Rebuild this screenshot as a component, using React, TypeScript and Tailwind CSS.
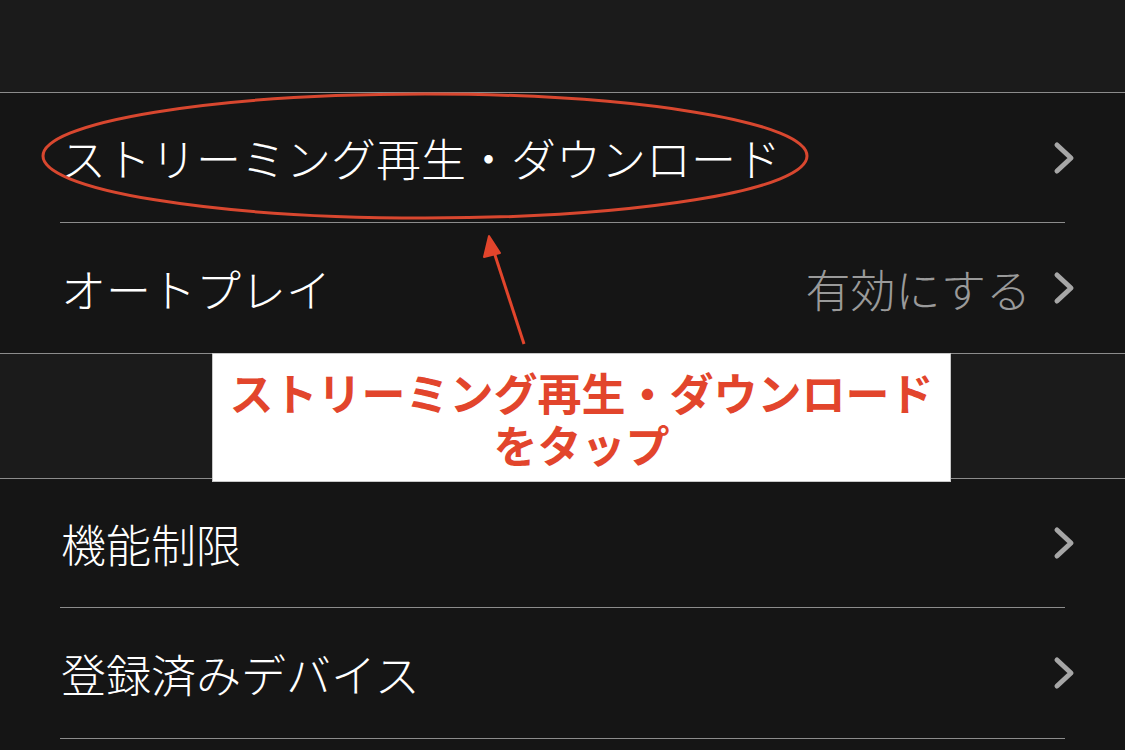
import React from "react";

const font = { fontFamily: '"Noto Sans CJK JP", "Noto Sans", sans-serif' };

function Chevron() {
  return (
    <svg width="26" height="36" viewBox="0 0 26 36" className="shrink-0">
      <polyline
        points="6,5 20,18 6,31"
        fill="none"
        stroke="#a6a6a6"
        strokeWidth="5"
        strokeLinecap="round"
        strokeLinejoin="round"
      />
    </svg>
  );
}

function Row({ label, value, h }: { label: string; value?: string; h: string }) {
  return (
    <div className={`flex items-center pl-[61px] pr-[48px] ${h}`}>
      <span className="flex-1 text-[45px] leading-none text-white font-light">{label}</span>
      {value && <span className="text-[45px] leading-none text-[#9a9a9a] font-light mr-[20px]">{value}</span>}
      <Chevron />
    </div>
  );
}

function InsetSep() {
  return (
    <div className="px-[60px]">
      <div className="h-px bg-[#8c8c8c]" />
    </div>
  );
}

export default function App() {
  return (
    <div className="relative w-[1125px] h-[750px] overflow-hidden bg-[#1a1a1a]" style={font}>
      <div className="h-[92px] bg-[#1b1b1b]" />
      <div className="h-px bg-[#8c8c8c]" />
      <div className="bg-[#151515]">
        <Row label="ストリーミング再生・ダウンロード" h="h-[129px]" />
        <InsetSep />
        <Row label="オートプレイ" value="有効にする" h="h-[130px]" />
      </div>
      <div className="h-px bg-[#8c8c8c]" />
      <div className="h-[124px] bg-[#1b1b1b]" />
      <div className="h-px bg-[#8c8c8c]" />
      <div className="bg-[#151515]">
        <Row label="機能制限" h="h-[128px]" />
        <InsetSep />
        <Row label="登録済みデバイス" h="h-[130px]" />
        <InsetSep />
        <div className="h-[20px]" />
      </div>

      {/* annotations */}
      <svg className="absolute left-0 top-0 pointer-events-none" width="1125" height="750">
        <ellipse cx="425" cy="156" rx="382" ry="62" fill="none" stroke="#d8472f" strokeWidth="3" />
        <line x1="524" y1="344" x2="494" y2="252" stroke="#e2452c" strokeWidth="3" />
        <polygon points="489,236 484,257 500,253" fill="#e2452c" stroke="#e2452c" strokeWidth="2" strokeLinejoin="round" />
      </svg>

      <div className="absolute left-[212px] top-[353px] w-[739px] h-[129px] bg-white border border-[#c8c8c8] flex items-center justify-center">
        <p className="text-[44px] leading-[52px] font-bold text-[#e2452c] text-center whitespace-nowrap">
          ストリーミング再生・ダウンロード
          <br />
          をタップ
        </p>
      </div>
    </div>
  );
}
